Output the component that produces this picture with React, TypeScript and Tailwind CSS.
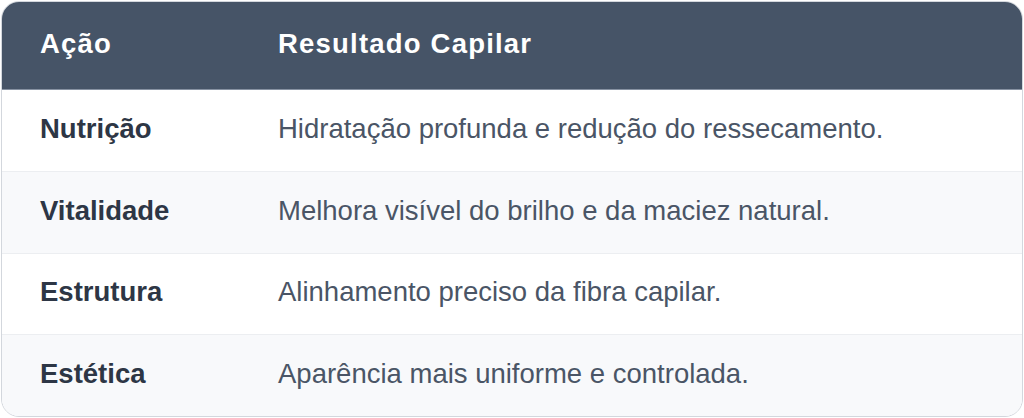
import React from 'react';

const rows = [
  { action: 'Nutrição', result: 'Hidratação profunda e redução do ressecamento.' },
  { action: 'Vitalidade', result: 'Melhora visível do brilho e da maciez natural.' },
  { action: 'Estrutura', result: 'Alinhamento preciso da fibra capilar.' },
  { action: 'Estética', result: 'Aparência mais uniforme e controlada.' }
];

export default function App() {
  return (
    <div className="w-[1024px] h-[418px] bg-white p-px font-['Liberation_Sans',Arial,sans-serif]">
      <div className="h-full rounded-[18px] border border-[#d3d7dd] overflow-hidden flex flex-col">
        <div className="h-[88px] shrink-0 bg-[#465467] grid grid-cols-[276px_1fr] items-center border-b border-[#8792a2] text-white font-bold text-[27.5px] tracking-[1.2px]">
          <div className="pl-[38px] -mt-[4px]">Ação</div>
          <div className="-mt-[4px]">Resultado Capilar</div>
        </div>
        {rows.map((r, i) => (
          <div
            key={r.action}
            className={`flex-1 grid grid-cols-[276px_1fr] items-center text-[27.5px] ${
              i % 2 === 1 ? 'bg-[#f8f9fb]' : 'bg-white'
            } ${i < rows.length - 1 ? 'border-b border-[#eceef1]' : ''}`}
          >
            <div className="pl-[38px] -mt-[4px] font-bold text-[#2d3645]">{r.action}</div>
            <div className="-mt-[4px] text-[#4a5566]">{r.result}</div>
          </div>
        ))}
      </div>
    </div>
  );
}
